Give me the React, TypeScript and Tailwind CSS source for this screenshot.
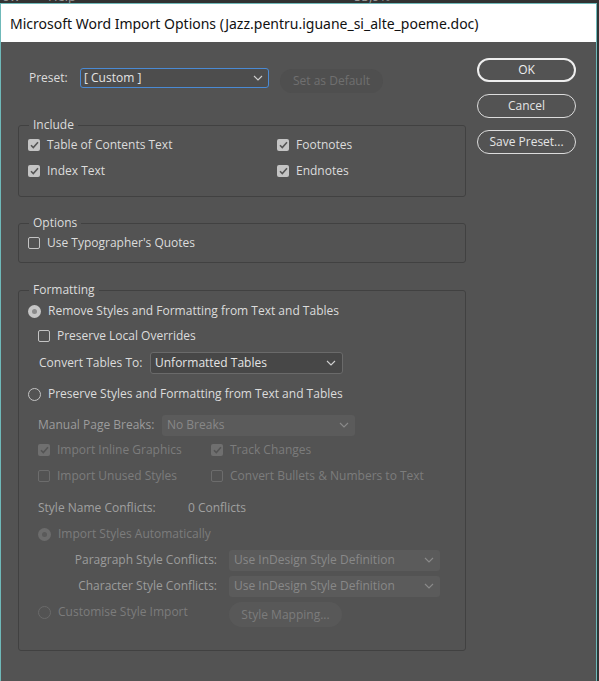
import React from 'react';

const FONT = { fontFamily: '"Open Sans", "Noto Sans", sans-serif' };

const Chevron: React.FC<{ color?: string }> = ({ color = '#d0d0d0' }) => (
  <svg width="10" height="6" viewBox="0 0 10 6" fill="none">
    <path d="M1 1l4 4 4-4" stroke={color} strokeWidth="1.1" />
  </svg>
);

const Checkbox: React.FC<{ checked?: boolean; disabled?: boolean }> = ({ checked, disabled }) => {
  if (checked) {
    return (
      <span className={`flex h-[12px] w-[12px] shrink-0 items-center justify-center rounded-[2px] ${disabled ? 'bg-[#6f6f6f]' : 'bg-[#c4c4c4]'}`}>
        <svg width="9" height="8" viewBox="0 0 9 8" fill="none">
          <path d="M1 4.2l2.3 2.3L8 1.3" stroke={disabled ? '#545454' : '#555555'} strokeWidth="1.6" />
        </svg>
      </span>
    );
  }
  return (
    <span className={`h-[12px] w-[12px] shrink-0 rounded-[2px] border ${disabled ? 'border-[#6c6c6c]' : 'border-[#c4c4c4]'}`} />
  );
};

const Radio: React.FC<{ checked?: boolean; disabled?: boolean }> = ({ checked, disabled }) => {
  if (checked) {
    return (
      <span className={`flex h-[13px] w-[13px] shrink-0 items-center justify-center rounded-full ${disabled ? 'bg-[#6c6c6c]' : 'bg-[#c6c6c6]'}`}>
        <span className={`h-[5px] w-[5px] rounded-full ${disabled ? 'bg-[#5a5a5a]' : 'bg-[#8a8a8a]'}`} />
      </span>
    );
  }
  return <span className={`h-[13px] w-[13px] shrink-0 rounded-full border ${disabled ? 'border-[#6a6a6a]' : 'border-[#c4c4c4]'}`} />;
};

const CheckRow: React.FC<{ label: string; checked?: boolean; disabled?: boolean; className?: string }> = ({ label, checked, disabled, className = '' }) => (
  <div className={`flex h-[20px] items-center gap-[7px] ${className}`}>
    <Checkbox checked={checked} disabled={disabled} />
    <span className={disabled ? 'text-[#7c7c7c]' : 'text-[#dcdcdc]'}>{label}</span>
  </div>
);

const RadioRow: React.FC<{ label: string; checked?: boolean; disabled?: boolean; className?: string }> = ({ label, checked, disabled, className = '' }) => (
  <div className={`flex h-[20px] items-center gap-[7px] ${className}`}>
    <Radio checked={checked} disabled={disabled} />
    <span className={disabled ? 'text-[#7c7c7c]' : 'text-[#dcdcdc]'}>{label}</span>
  </div>
);

const Group: React.FC<{ title: string; className?: string; children: React.ReactNode }> = ({ title, className = '', children }) => (
  <fieldset className={`rounded-[3px] border border-[#414141] pl-[9px] pr-[9px] ${className}`}>
    <legend className="ml-[1px] px-[4px] leading-[16px] text-[#dcdcdc]">{title}</legend>
    {children}
  </fieldset>
);

export default function App() {
  return (
    <div className="h-[681px] w-[599px] overflow-hidden bg-[#2e3636] text-[12px]" style={FONT}>
      {/* app menu strip behind the dialog */}
      <div className="h-[3px] overflow-hidden bg-[#323232]">
        <div className="-mt-[11px] flex gap-[28px] pl-[2px] text-[13px] leading-[14px] text-[#9a9a9a]">
          <span>ow</span>
          <span>Help</span>
          <span className="ml-[250px]">53,9%</span>
        </div>
      </div>

      <div className="flex h-[678px] w-[597px] flex-col border-x border-t border-[#6fb9b9]">
        {/* title bar */}
        <div className="flex h-[38px] shrink-0 items-center bg-white pl-[9px] text-[14px] text-[#111]" style={{ fontFamily: '"Noto Sans", "Open Sans", sans-serif' }}>
          Microsoft Word Import Options (Jazz.pentru.iguane_si_alte_poeme.doc)
        </div>

        {/* body */}
        <div className="flex flex-1 bg-[#535353] pl-[17px]">
          {/* left column */}
          <div className="flex w-[448px] flex-col pt-[26px]">
            {/* preset row */}
            <div className="flex items-start">
              <span className="ml-[11px] mt-[2px] w-[51px] text-[#dcdcdc] leading-[16px]">Preset:</span>
              <div className="flex h-[20px] w-[189px] items-center justify-between rounded-[3px] border border-[#4a8ad4] bg-[#4d4d4d] pl-[3px] pr-[5px] text-[#e4e4e4]">
                <span>[ Custom ]</span>
                <Chevron />
              </div>
              <div className="ml-[11px] mt-[1px] flex h-[24px] w-[103px] items-center justify-center rounded-full bg-[#4f4f4f] text-[#6f6f6f]">
                Set as Default
              </div>
            </div>

            <Group title="Include" className="mt-[24px] pb-[15px]">
              <div className="grid grid-cols-[249px_1fr] gap-y-[6px] pt-[2px]">
                <CheckRow label="Table of Contents Text" checked />
                <CheckRow label="Footnotes" checked />
                <CheckRow label="Index Text" checked />
                <CheckRow label="Endnotes" checked />
              </div>
            </Group>

            <Group title="Options" className="mt-[18px] pb-[9px]">
              <CheckRow label="Use Typographer's Quotes" className="mt-[2px]" />
            </Group>

            <Group title="Formatting" className="mt-[19px] pb-[23px]">
              <RadioRow label="Remove Styles and Formatting from Text and Tables" checked className="mt-[3px]" />
              <CheckRow label="Preserve Local Overrides" className="ml-[10px] mt-[5px]" />
              <div className="ml-[11px] mt-[6px] flex h-[22px] items-center">
                <span className="w-[111px] text-[#dcdcdc]">Convert Tables To:</span>
                <div className="flex h-[22px] w-[193px] items-center justify-between rounded-[3px] border border-[#6a6a6a] bg-[#474747] pl-[4px] pr-[6px] text-[#e4e4e4]">
                  <span>Unformatted Tables</span>
                  <Chevron />
                </div>
              </div>
              <RadioRow label="Preserve Styles and Formatting from Text and Tables" className="mt-[10px]" />

              <div className="ml-[10px] mt-[10px] flex h-[22px] items-center">
                <span className="w-[124px] text-[#9c9c9c]">Manual Page Breaks:</span>
                <div className="flex h-[21px] w-[193px] items-center justify-between rounded-[3px] bg-[#5b5b5b] pl-[5px] pr-[6px] text-[#888888]">
                  <span>No Breaks</span>
                  <Chevron color="#8a8a8a" />
                </div>
              </div>
              <div className="ml-[10px] mt-[4px] grid grid-cols-[173px_1fr] gap-y-[6px]">
                <CheckRow label="Import Inline Graphics" checked disabled />
                <CheckRow label="Track Changes" checked disabled />
                <CheckRow label="Import Unused Styles" disabled />
                <CheckRow label="Convert Bullets & Numbers to Text" disabled />
              </div>
              <div className="ml-[10px] mt-[12px] flex h-[20px] items-center text-[#a0a0a0]">
                <span className="w-[150px]">Style Name Conflicts:</span>
                <span>0 Conflicts</span>
              </div>
              <RadioRow label="Import Styles Automatically" checked disabled className="ml-[10px] mt-[6px]" />
              <div className="mt-[5px] flex h-[22px] items-center">
                <span className="w-[189px] text-right text-[#9c9c9c]">Paragraph Style Conflicts:</span>
                <div className="ml-[12px] flex h-[21px] w-[211px] items-center justify-between rounded-[3px] bg-[#5b5b5b] pl-[5px] pr-[6px] text-[#888888]">
                  <span>Use InDesign Style Definition</span>
                  <Chevron color="#8a8a8a" />
                </div>
              </div>
              <div className="mt-[4px] flex h-[22px] items-center">
                <span className="w-[189px] text-right text-[#9c9c9c]">Character Style Conflicts:</span>
                <div className="ml-[12px] flex h-[21px] w-[211px] items-center justify-between rounded-[3px] bg-[#5b5b5b] pl-[5px] pr-[6px] text-[#888888]">
                  <span>Use InDesign Style Definition</span>
                  <Chevron color="#8a8a8a" />
                </div>
              </div>
              <div className="mt-[5px] flex items-start">
                <RadioRow label="Customise Style Import" disabled className="ml-[10px] w-[191px]" />
                <div className="flex h-[25px] w-[113px] items-center justify-center rounded-full bg-[#585858] text-[#7c7c7c]">
                  Style Mapping...
                </div>
              </div>
            </Group>
          </div>

          {/* right column */}
          <div className="ml-[11px] flex flex-col gap-[12px] pt-[16px]">
            <div className="flex h-[24px] w-[99px] items-center justify-center rounded-full border-2 border-[#eeeeee] text-[#eeeeee]">OK</div>
            <div className="flex h-[24px] w-[99px] items-center justify-center rounded-full border border-[#dcdcdc] text-[#e4e4e4]">Cancel</div>
            <div className="flex h-[24px] w-[99px] items-center justify-center rounded-full border border-[#dcdcdc] text-[#e4e4e4]">Save Preset...</div>
          </div>
        </div>
      </div>
    </div>
  );
}
